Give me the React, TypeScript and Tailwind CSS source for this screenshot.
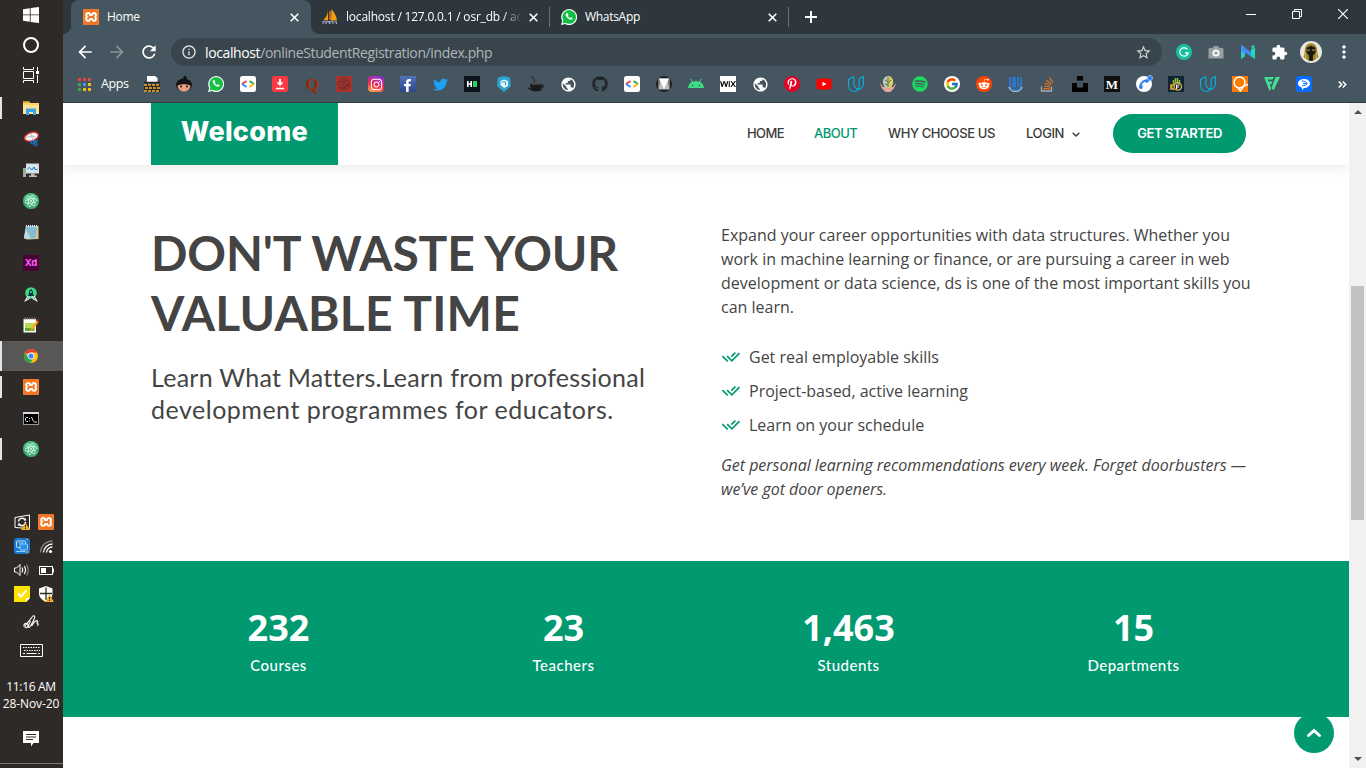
import React from "react";
import type { ReactNode } from "react";
import {
  FaInstagram, FaFacebookF, FaTwitter, FaGithub, FaPinterestP,
  FaSpotify, FaRedditAlien, FaPhoneAlt, FaWix,
} from "react-icons/fa";
import { FcGoogle } from "react-icons/fc";
import { SiXampp, SiUdacity } from "react-icons/si";
import { RiCheckDoubleLine } from "react-icons/ri";
import { BiChevronDown } from "react-icons/bi";
import { MdExtension, MdArrowBack, MdArrowForward, MdRefresh, MdInfoOutline, MdStarBorder, MdMoreVert, MdPublic } from "react-icons/md";

const Svg = ({ children, size = 16 }: { children: ReactNode; size?: number }) => (
  <svg width={size} height={size} viewBox="0 0 16 16" fill="none" className="block shrink-0">{children}</svg>
);

const Xampp = () => (
  <span className="flex size-4 shrink-0 items-center justify-center rounded-[2px] bg-white text-[#f37623]">
    <SiXampp size={16} />
  </span>
);

const Whats = () => (
  <Svg>
    <path d="M0 16l1.200-4A8 8 0 1 1 4.200 15Z" fill="#fff" />
    <path d="M1.600 14.500l.8-3A6.800 6.800 0 1 1 4.600 13.700Z" fill="#12c143" />
    <path d="M5.300 4.200c-1 .7-1 2.300.9 4.400 2 2.200 4 2.700 5 1.700.5-.5.500-1.100.2-1.300L10 8.200l-.9.9C8 8.700 7.200 7.800 6.800 7l.7-.8-.7-1.700c-.2-.5-1-.6-1.500-.3Z" fill="#fff" />
  </Svg>
);

const Atom = () => (
  <Svg>
    <circle cx="8" cy="8" r="8" fill="#4fbf87" />
    <path d="M0 8a8 8 0 0 0 16 0Z" fill="#2a9865" opacity=".5" />
    <g stroke="#e6fbef" strokeWidth=".8">
      <ellipse cx="8" cy="8" rx="2.300" ry="5.800" transform="rotate(20 8 8)" />
      <ellipse cx="8" cy="8" rx="2.300" ry="5.800" transform="rotate(80 8 8)" />
      <ellipse cx="8" cy="8" rx="2.300" ry="5.800" transform="rotate(140 8 8)" />
    </g>
    <circle cx="8" cy="8" r="1" fill="#e6fbef" />
  </Svg>
);

const CodeBox = () => (
  <Svg>
    <rect width="16" height="16" rx="2.500" fill="#fff" />
    <path d="M6.500 5 2 8" stroke="#ea4335" strokeWidth="2" />
    <path d="m2 8 4.500 3" stroke="#4285f4" strokeWidth="2" />
    <path d="M9.500 5 14 8" stroke="#34a853" strokeWidth="2" />
    <path d="m14 8-4.500 3" stroke="#fbbc05" strokeWidth="2" />
  </Svg>
);

const Chrome = () => (
  <Svg>
    <circle cx="8" cy="8" r="7" fill="#fbc116" />
    <path d="M8 8 1.900 4.500A7 7 0 0 1 14.100 4.500H8Z" fill="#e33b2e" />
    <path d="M1.900 4.500A7 7 0 0 0 7.500 15L10.500 9.500 8 8 5 9.500Z" fill="#2ba24c" />
    <circle cx="8" cy="8" r="3.400" fill="#fff" />
    <circle cx="8" cy="8" r="2.600" fill="#4285f4" />
  </Svg>
);

const Warn = () => (
  <>
    <path d="m11.500 8.500 4.500 7.500H7Z" fill="#f5b021" />
    <path d="M11.500 11v2.300M11.500 14v1" stroke="#222" strokeWidth="1" />
  </>
);

type Task = { icon: ReactNode; open?: boolean; active?: boolean };

const tasks: Task[] = [
  {
    open: true,
    icon: (
      <Svg>
        <path d="M0 1.500h6l1.500 1.500H16v11H0Z" fill="#fbd667" />
        <path d="M0 1.500h6V3H0Z" fill="#e8a92c" />
        <path d="M0 5h16v9H0Z" fill="#fee394" />
        <path d="M3 15V8.500h10V15h-3v-3H6v3Z" fill="#36a8e8" />
      </Svg>
    ),
  },
  {
    icon: (
      <Svg>
        <ellipse cx="8.500" cy="5.700" rx="7.200" ry="4.200" transform="rotate(-18 8.500 5.700)" fill="#f6f6f6" stroke="#c9302b" strokeWidth="1.500" />
        <path d="M3 6.500 9 5 8 2M9 5l4 1.500M8.500 5.500l2.500 5" stroke="#a9b1b5" strokeWidth=".8" />
        <ellipse cx="9.500" cy="11.500" rx="1.700" ry="1.300" stroke="#1674c4" strokeWidth="1.300" />
        <ellipse cx="12.700" cy="13" rx="1.300" ry="1.900" stroke="#1674c4" strokeWidth="1.300" />
        <path d="m11 10.500 4-1" stroke="#1674c4" strokeWidth="1.300" />
      </Svg>
    ),
  },
  {
    icon: (
      <Svg>
        <rect x="3" y="1.500" width="13" height="10" fill="#dcdcdc" />
        <rect x="4.500" y="3" width="10" height="7" fill="#cfeaf7" />
        <path d="m4.500 7 2-1.500L9 8l2-3 1.500 3 2-1" stroke="#1d6fa5" />
        <path d="M8 11.500h3.500v2H14V15H6v-1.500h2Z" fill="#bdbdbd" />
        <rect x="0" y="6" width="3" height="9" fill="#a9a9a9" />
        <path d="M1 7v4" stroke="#3fd428" />
      </Svg>
    ),
  },
  { icon: <Atom /> },
  {
    icon: (
      <Svg>
        <path d="M3 2h12.500v13L4 15.500 1 14Z" fill="#d9c795" />
        <path d="M3 2h11l-1 12.500H1Z" fill="#86bccd" />
        <path d="M2.500 5 8 14.500H1Z" fill="#d1eaf0" opacity=".7" />
        <path d="M3 2h11" stroke="#e8eef0" strokeWidth="2" strokeDasharray="1 1" />
      </Svg>
    ),
  },
  {
    icon: (
      <span className="flex size-4 items-center justify-center rounded-[2px] bg-[#470137] font-[Inter,sans-serif] text-[9.5px] leading-none font-bold text-[#ff61f6]">
        Xd
      </span>
    ),
  },
  {
    icon: (
      <Svg>
        <circle cx="8" cy="7" r="5.800" fill="#3ddc84" />
        <path d="M8 3c1.800 1 2.300 3 2.100 5l.9 2H5l.9-2C5.700 6 6.200 4 8 3Z" fill="#073042" />
        <circle cx="8" cy="6" r="1.100" fill="#3ddc84" />
        <path d="m5 10-2.500 4.500L5.500 13 7 10.500M11 10l2.500 4.500-3-1.500L9 10.500" stroke="#dfe8ea" strokeWidth="1.300" />
      </Svg>
    ),
  },
  {
    icon: (
      <Svg>
        <path d="M.5 2H13v13.500H.5Z" fill="#fff" />
        <path d="M2 6h9.500v8H2Z" fill="#b5dc50" />
        <path d="M2 11h9.500v3H2Z" fill="#5fa928" />
        <path d="M1 1.500h12" stroke="#777" strokeWidth="2" strokeDasharray="1.500 1" />
        <path d="m8 11.500 5.500-8 2 1.400-5.400 7.800L7.500 14Z" fill="#f3a81d" />
        <path d="m13.300 3.700 1.500-2 1.400 1-1 2Z" fill="#c22622" />
      </Svg>
    ),
  },
  { icon: <Chrome />, active: true, open: true },
  { icon: <Xampp />, open: true },
  {
    icon: (
      <Svg>
        <rect x=".5" y="2.500" width="15" height="12" fill="#000" stroke="#9b9b9b" />
        <path d="M0 3h16" stroke="#d8dce0" strokeWidth="2" />
        <path d="M5 7.500H3.500L2.500 8.500v2l1 1H5M6.500 8v1M6.500 10.500v1M8.500 7l2 4.500M11 12h3" stroke="#fff" strokeWidth=".9" />
      </Svg>
    ),
  },
  { icon: <Atom />, open: true },
];

const tray: ReactNode[] = [
  <Svg key="update">
    <path d="M1 3.500 15.500 1v13.500L1 13.500Z" stroke="#fff" />
    <path d="M4.500 7.500A3.500 3.500 0 0 1 11 6l.5-1.500M11.500 8A3.500 3.500 0 0 1 5 10l-.7 1.500" stroke="#fff" strokeWidth="1.500" />
    <Warn />
  </Svg>,
  <Xampp key="xampp" />,
  <Svg key="display">
    <rect width="16" height="16" rx="3" fill="#1879cf" />
    <rect x="2.500" y="3" width="9" height="6.500" rx="1" stroke="#bde3ff" />
    <rect x="6" y="6" width="7.500" height="6" rx="1" fill="#2a8fe0" stroke="#8fd0ff" />
    <path d="M4.500 5h5M2 13.500h9" stroke="#8fd0ff" />
    <path d="M11 14h4M12 1.500h2" stroke="#f2a33a" />
  </Svg>,
  <Svg key="wifi">
    <path d="M2.500 14.500A12 12 0 0 1 14.500 3" stroke="#8a8886" strokeWidth="1.300" />
    <path d="M5.500 14.500a9 9 0 0 1 9-8.500M8.500 14.500a6 6 0 0 1 6-5.500" stroke="#fff" strokeWidth="1.300" />
    <circle cx="12.500" cy="13.500" r="1.600" fill="#fff" />
  </Svg>,
  <Svg key="sound">
    <path d="M.5 6h2L6 2.500v11L2.500 10h-2Z" stroke="#fff" />
    <path d="M8 5.500q1.500 2.500 0 5M10.300 4q2.500 4 0 8" stroke="#fff" strokeWidth="1.200" />
    <path d="M12.500 2.500q3.500 5.500 0 11" stroke="#8a8886" strokeWidth="1.200" />
  </Svg>,
  <Svg key="battery">
    <rect x="1.500" y="4.500" width="13" height="8" stroke="#fff" />
    <rect x="3" y="6" width="5" height="5" fill="#fff" />
    <path d="M15.500 6.500v4" stroke="#fff" />
  </Svg>,
  <Svg key="note">
    <path d="M0 0h16v12l-4 4H0Z" fill="#fde300" />
    <path d="m4 7.500 3 3 5.500-6" stroke="#fff" strokeWidth="2" />
    <path d="M12 16v-4h4Z" fill="#fff" />
  </Svg>,
  <Svg key="shield">
    <path d="M8 0 14.500 2.500v5C14.500 12 11 14.500 8 16 5 14.500 1 12 1 7.500v-5Z" fill="#fff" />
    <path d="M8 1.500V14M2 7.500h12" stroke="#2d2926" strokeWidth="1.300" />
    <Warn />
  </Svg>,
];

const Sidebar = () => (
  <aside className="flex w-[63px] shrink-0 flex-col bg-[#2d2a27] text-white">
    <div className="flex h-[93px] flex-col items-center pr-px">
      <div className="flex h-[30px] items-center">
        <Svg>
          <path d="M0 2.200 6.800 1.200v6.200H0ZM7.600 1 16 0v7.400H7.600ZM0 8.300h6.800v6.500L0 13.800ZM7.600 8.300H16V16l-8.400-1Z" fill="#fff" />
        </Svg>
      </div>
      <div className="flex h-[30px] items-center">
        <span className="size-4 rounded-full border-[2.5px] border-white" />
      </div>
      <div className="flex h-[30px] items-center">
        <Svg>
          <path d="M.5 0v2.500h10V0M.5 16v-2.500h10V16M.5 4.500h10v7H.5ZM14.500 0v4M14.500 8v8" stroke="#fff" />
          <path d="M13 4h3v3h-3Z" fill="#fff" />
        </Svg>
      </div>
    </div>
    {tasks.map((t, i) => (
      <div key={i} className={t.active ? "mb-px flex h-[30px] items-center bg-[#5a5856]" : "flex h-[31px] items-center pb-px"}>
        <span className={t.open ? (t.active ? "h-full w-0.5 bg-[#e4e4e3]" : "h-[22px] w-0.5 bg-[#e4e4e3]") : "w-0.5"} />
        <span className="ml-[21px]">{t.icon}</span>
      </div>
    ))}
    <div className="mt-[49px] ml-3.5 grid w-10 grid-cols-2 gap-2">{tray}</div>
    <div className="mt-3 flex flex-col items-center pr-px">
      <Svg>
        <path d="M.8 12.500C.8 9.500 3 8.500 4.500 10c1.300 1.500-.5 4.500-2.200 3.500C.5 12 7 6.500 9 3c1-2 3.500-1.500 2.500 1C10.500 7 7 13 6 13.500c-1.500.3-.5-3 1.500-6.500M8.500 12c1.500-1 2-4 4-5s3.500 1 1 2c2 .2 2.500 1.800.5 2.500" stroke="#fff" strokeWidth="1.100" />
      </Svg>
      <svg width="23" height="13" viewBox="0 0 23 13" fill="none" className="mt-3.5 block">
        <path d="M.5.5h22v12H.5Z" stroke="#fff" />
        <path d="M3 3.500h17M4 6.500h16" stroke="#fff" strokeWidth="1.200" strokeDasharray="1.500 1" />
        <path d="M3 9.500h2M6.500 9.500h10M18 9.500h2" stroke="#fff" strokeWidth="1.200" />
      </svg>
    </div>
    <div className="mt-[21px] pr-px text-center font-['Open_Sans',sans-serif] text-[12px] leading-[17px] whitespace-nowrap">
      <div className="tracking-[-0.35px]">11:16 AM</div>
      <div className="tracking-[-0.1px]">28-Nov-20</div>
    </div>
    <div className="mt-[19px] flex justify-center pr-px">
      <Svg>
        <path d="M0 0h16v12H10.500L8 15.500V12H0Z" fill="#fff" />
        <path d="M3 3.500h10M3 6h10M3 8.500h7" stroke="#2d2a27" />
      </Svg>
    </div>
    <div className="mt-auto mb-1 h-px bg-[#7d7b79]" />
  </aside>
);

const Close = () => (
  <svg width="9" height="9" viewBox="0 0 9 9" fill="none" className="block shrink-0">
    <path d="m.7.7 7.600 7.600M8.300.7.7 8.300" stroke="#fff" strokeWidth="1.600" />
  </svg>
);

const TabStrip = () => (
  <div className="flex h-[34px] bg-[#2d373d] text-[12px] text-white">
    <div className="w-2 bg-[#455660]"><div className="h-full rounded-br-lg bg-[#2d373d]" /></div>
    <div className="flex w-60 items-center rounded-t-lg bg-[#455660] pr-3 pl-3">
      <Xampp />
      <span className="ml-2 tracking-[-0.3px]">Home</span>
      <span className="ml-auto"><Close /></span>
    </div>
    <div className="w-2 bg-[#455660]"><div className="h-full rounded-bl-lg bg-[#2d373d]" /></div>
    <div className="flex w-[231px] items-center pr-3 pl-[3px]">
      <Svg>
        <path d="M6 1C6 5 4 9 1 11l5 .5Z" fill="#f89c0e" />
        <path d="M9.500 0C13 4 14.500 8 15 11.500H9Z" fill="#f89c0e" />
        <path d="M8 2v9" stroke="#d8801a" strokeWidth="1.500" />
        <path d="M1 15v-2.500h2l1 2 1-2h2v2M8 15v-2.500h3V15M12 13h2.500v2" stroke="#9a9cc8" strokeWidth="1.200" />
      </Svg>
      <span className="ml-2 w-[182px] mask-[linear-gradient(to_right,#000_86%,transparent_97%)] tracking-[-0.2px] whitespace-nowrap">
        localhost / 127.0.0.1 / osr_db / ad
      </span>
      <span className="ml-auto"><Close /></span>
    </div>
    <div className="my-[7px] ml-[-1px] w-px bg-[#667178]" />
    <div className="flex w-[238px] items-center pr-[11px] pl-[11px]">
      <Whats />
      <span className="ml-2 tracking-[-0.3px]">WhatsApp</span>
      <span className="ml-auto"><Close /></span>
    </div>
    <div className="my-[7px] w-px bg-[#667178]" />
    <svg width="12" height="12" viewBox="0 0 12 12" fill="none" className="mt-[11px] ml-4 block">
      <path d="M6 0v12M0 6h12" stroke="#fff" strokeWidth="2" />
    </svg>
    <div className="mt-[9px] mr-[18px] ml-auto flex gap-9">
      <svg width="10" height="10" viewBox="0 0 10 10" fill="none"><path d="M0 5.500h10" stroke="#fff" /></svg>
      <svg width="10" height="10" viewBox="0 0 10 10" fill="none">
        <path d="M.5 2.500h7v7h-7ZM2.500 2.500v-2h7v7h-2" stroke="#fff" />
      </svg>
      <svg width="10" height="10" viewBox="0 0 10 10" fill="none"><path d="m0 0 10 10M10 0 0 10" stroke="#fff" strokeWidth="1.200" /></svg>
    </div>
  </div>
);

const AddressBar = () => (
  <div className="flex h-9 items-center bg-[#455660] text-white">
    <div className="flex w-[108px] items-center gap-3 pl-3">
      <MdArrowBack size={20} />
      <MdArrowForward size={20} className="text-[#89949a]" />
      <MdRefresh size={20} />
    </div>
    <div className="flex h-7 w-[991px] items-center rounded-full bg-[#39454c] pr-2.5 pl-2.5">
      <MdInfoOutline size={16} className="text-[#dfe2e4]" />
      <span className="ml-2 text-[14px] tracking-[-0.38px] text-[#afb5b9]"><span className="text-white">localhost</span>/onlineStudentRegistration/index.php</span>
      <MdStarBorder size={17} className="ml-auto text-[#ced2d4]" />
    </div>
    <div className="ml-3.5 flex items-center gap-4">
      <span className="flex size-4 items-center justify-center rounded-full bg-[#15c39a]">
        <Svg><path d="M11.300 5.400a4.200 4.200 0 1 0 .8 3.400H9M11 8.500v3" stroke="#fff" strokeWidth="1.300" /></Svg>
      </span>
      <Svg>
        <path d="M1.500 4h3L6 2h4l1.500 2h3l1 1v9.500H.5V5Z" fill="#9b9fa1" />
        <circle cx="8" cy="9" r="2.700" stroke="#fff" strokeWidth="1.700" />
      </Svg>
      <Svg>
        <path d="m1 1 4 2.500V12L1 15Z" fill="#4aa5ee" />
        <path d="m1 1 14 10v4L1 6Z" fill="#3f8df1" />
        <path d="M11 5.500 15 3.500V15l-4-3ZM11.500 1.500h3v1.800l-3 1.500Z" fill="#25d6b4" />
        <path d="M1 15V8l4 3v1Z" fill="#25d6b4" />
      </Svg>
      <MdExtension size={17} className="-ml-px" />
    </div>
    <span className="ml-3 flex size-[22px] items-center justify-center rounded-full bg-[#e8e6df]">
      <Svg size={20}>
        <path d="M8 1C4.500 1 3 4 3 8l-1 4 4 3h4l4-3-1-4c0-4-1.500-7-5-7Z" fill="#9b8427" />
        <path d="M4.500 4.500 8 3l3.500 1.500v4L9.500 11v4h-3v-4l-2-2.500Z" fill="#191715" />
        <path d="M3 8l1 5M13 8l-1 5M5 6.500h2M9 6.500h2" stroke="#e0c04c" strokeWidth=".8" />
      </Svg>
    </span>
    <MdMoreVert size={20} className="ml-3" />
  </div>
);

const bookmarks: ReactNode[] = [
  <Svg key="spy">
    <path d="M3 0h8l2.500 2v4H3Z" fill="#fff" />
    <path d="M0 6.500h16" stroke="#222" strokeWidth="1.500" />
    <path d="M0 8h16v8H0Z" fill="#2b2720" />
    <path d="M0 9h16M1 12h15M0 15h16" stroke="#f3b93a" strokeWidth="1.700" strokeDasharray="3 1" />
  </Svg>,
  <Svg key="ninja">
    <circle cx="9" cy="1.800" r="1.800" fill="#111" />
    <ellipse cx="8" cy="9" rx="8" ry="6.500" fill="#141414" />
    <path d="M1.500 9.500Q8 7 14.500 9.500C14 14 11 15.500 8 15.500S2 14 1.500 9.500Z" fill="#e9a184" />
    <path d="M4 10.500h2M10 10.500h2" stroke="#111" strokeWidth="1.700" />
  </Svg>,
  <Whats key="wa" />,
  <CodeBox key="code1" />,
  <Svg key="dl">
    <rect width="16" height="16" rx="2.500" fill="#fa3b43" />
    <path d="M7 3h2v3.500h2.500L8 10 4.500 6.500H7Z" fill="#fff" />
    <path d="M4 12.500h8" stroke="#fff" strokeWidth="1.500" />
  </Svg>,
  <span key="quora" className="flex size-4 items-center justify-center font-['Liberation_Serif',serif] text-[17px] leading-none font-bold text-[#a82400]">Q</span>,
  <Svg key="swirl">
    <rect width="16" height="16" fill="#a9322b" />
    <circle cx="8" cy="8" r="5.800" stroke="#69302d" />
    <path d="M3 7c3-4 5 1 8-3M5 12c-1-4 4-3 4-7M13 8c-4-1-3 4-7 4M8 13c0-3 4-2 5-4" stroke="#69302d" strokeWidth="1.200" />
  </Svg>,
  <span key="ig" className="flex size-4 items-center justify-center rounded-[4px] bg-[linear-gradient(20deg,#fdb743,#ee2a4b_45%,#b02bb8_75%,#6b3ad0)] text-white"><FaInstagram size={13} /></span>,
  <span key="fb" className="flex size-4 items-end justify-end bg-linear-to-b from-[#5174bb] to-[#2c4788] pr-0.5 text-white"><FaFacebookF size={13} /></span>,
  <FaTwitter key="tw" size={15} className="shrink-0 text-[#1da1f2]" />,
  <Svg key="hr">
    <rect width="16" height="16" fill="#0e141e" />
    <path d="M3.800 5v6M7.200 5v6M3.500 8h4" stroke="#fff" strokeWidth="1.600" />
    <rect x="9" y="5" width="4" height="6" fill="#1ed65f" />
  </Svg>,
  <Svg key="cube">
    <path d="M2 1.500 8 0l6 1.500 1 8.500L8 16 1 10Z" fill="#2fa4cf" />
    <path d="M8 3.500 12 5v5L8 12 4.500 9V5Z" fill="#e8f7fd" />
    <path d="M5.500 6h4v3" stroke="#2fa4cf" strokeWidth="1.200" />
  </Svg>,
  <Svg key="coffee">
    <path d="M5 0c-2 2 3 3 1 6" stroke="#17191b" />
    <path d="M2 8h11c0 5-2 7-5 7s-6-2-6-7Z" fill="#17191b" />
    <ellipse cx="7.500" cy="8" rx="5" ry="1" fill="#444" />
    <path d="M12 9.500c4-1.500 4 2 0 2.500M0 12q8 5 14 1" stroke="#17191b" strokeWidth="1.300" />
  </Svg>,
  <MdPublic key="g1" size={17} className="shrink-0" />,
  <FaGithub key="gh" size={16} className="shrink-0 text-[#20262b]" />,
  <CodeBox key="code2" />,
  <Svg key="md">
    <circle cx="8" cy="8" r="8" fill="#212121" />
    <path d="M2.500 2.500h11v11h-11Z" fill="#bdbdbd" />
    <path d="M2.500 2.500H5l-2.500 11ZM13.500 2.500H11l2.500 11Z" fill="#757575" />
    <path d="M3 2.500h10L8 13Z" fill="#fff" />
  </Svg>,
  <Svg key="android">
    <path d="M0 12a8 7 0 0 1 16 0Z" fill="#3ddc84" />
    <path d="m4.500 6-2-3M11.500 6l2-3" stroke="#3ddc84" />
    <circle cx="4.500" cy="9.500" r=".8" fill="#455660" />
    <circle cx="11.500" cy="9.500" r=".8" fill="#455660" />
  </Svg>,
  <span key="wix" className="flex size-4 items-center justify-center bg-white text-black"><FaWix size={16} /></span>,
  <MdPublic key="g2" size={17} className="shrink-0" />,
  <span key="pin" className="flex size-4 items-center justify-center rounded-full bg-[#e60023] text-white"><FaPinterestP size={12} /></span>,
  <Svg key="yt"><rect x=".5" y="2.500" width="15" height="11" rx="2.500" fill="#f00" /><path d="m6.500 5.800 4 2.200-4 2.200Z" fill="#fff" /></Svg>,
  <SiUdacity key="ud1" size={16} className="shrink-0 text-[#02b3e4]" />,
  <Svg key="brain">
    <path d="M0 7c1 5 4 8 6 9h4c2-1 5-4 6-9l-3 4H3Z" fill="#e8a39b" />
    <ellipse cx="8" cy="6" rx="5.200" ry="6" fill="#b8cfae" />
    <path d="M8 0a5.200 6 0 0 1 0 12Z" fill="#d8cf62" />
    <path d="M8 1v10M5 4l3 2M11 4 8 7M5 8l3 1" stroke="#5d6f58" />
  </Svg>,
  <span key="sp" className="flex size-4 items-center justify-center text-[#1ed760]"><FaSpotify size={16} /></span>,
  <span key="goo" className="flex size-4 items-center justify-center rounded-full bg-white"><FcGoogle size={14} /></span>,
  <span key="red" className="flex size-4 items-center justify-center rounded-full bg-[#ff4500] text-white"><FaRedditAlien size={12} /></span>,
  <Svg key="ublue">
    <path d="M2 1v8c0 3.500 2.500 5 5.500 5s5.500-1.500 5.500-5V1M5 1v9.500h2V1M10 1v10" stroke="#2f78d0" strokeWidth="1.800" />
    <path d="M1 11c1 3.500 3.500 4.500 6.500 4.500s5.500-1 6.500-4.500" stroke="#e4eef9" />
  </Svg>,
  <Svg key="so">
    <path d="M1.500 10.500v4.500h10v-4.500" stroke="#a9adb0" strokeWidth="1.300" />
    <path d="M3.500 12.700h6.500M3.800 10l6.200.8M4.700 7.200l6 2M6.500 4.300l5 3.800M9.500 1.500l3.500 5.200" stroke="#e8711d" strokeWidth="1.200" />
  </Svg>,
  <Svg key="uns"><path d="M5 0h6v4.500H5ZM0 7h5v4.500h6V7h5v9H0Z" fill="#000" /></Svg>,
  <span key="med" className="flex size-4 items-center justify-center bg-[#12100e] font-['Liberation_Serif',serif] text-[13px] leading-none font-bold text-white">M</span>,
  <span key="ph" className="relative flex size-4 items-center justify-center rounded-full bg-white text-[#2b7cf0]">
    <FaPhoneAlt size={10} className="rotate-90" />
    <span className="absolute -top-px -right-px size-[6px] rounded-full border border-[#8cbcff] bg-[#2b7cf0]" />
  </span>,
  <Svg key="hand">
    <rect width="16" height="16" fill="#0c2433" />
    <path d="M5.500 8V4M7.500 7V2M9.500 7V2M11.500 8V4" stroke="#8fbd3f" strokeWidth="1.500" />
    <path d="M3 8v6M6 8l-3 3 3 3" stroke="#e6a52e" strokeWidth="1.500" />
    <circle cx="9.800" cy="10.500" r="3.700" stroke="#efb73d" strokeWidth="1.300" />
    <path d="M8.500 9h3M8.500 11h2.500M8.500 9v4" stroke="#fff" />
  </Svg>,
  <SiUdacity key="ud2" size={16} className="shrink-0 text-[#02b3e4]" />,
  <Svg key="org">
    <rect width="16" height="16" fill="#ff7a00" />
    <circle cx="7.500" cy="6.500" r="5.500" stroke="#fff" strokeWidth="1.500" />
    <path d="m6 12 2.500 3 3-5c3 0 4-1.500 4.500-2" stroke="#fff" strokeWidth="1.500" />
  </Svg>,
  <Svg key="grn">
    <path d="M0 1h10L8.500 3.500h-5l1 2h4L7.500 8H6l1 5-1.500 2ZM11.500 1H16L9.500 14.500 7.500 12Z" fill="#43dd93" />
  </Svg>,
  <Svg key="msg">
    <rect width="16" height="16" rx="3" fill="#0a6cff" />
    <path d="M8 3c3.500 0 6 1.900 6 4.500S11 12 8 12l-2 2v-2.300C4 11 2 9.700 2 7.500S4.500 3 8 3Z" fill="#fff" />
    <path d="M6 5c2 0 5 1 5 2.500S8 9.500 6 10M7 7.500h4" stroke="#0a6cff" />
  </Svg>,
];

const appColors = ["bg-[#e8453c]", "bg-[#e8453c]", "bg-[#e8453c]", "bg-[#34a853]", "bg-[#4a90f5]", "bg-[#fbbc05]", "bg-[#34a853]", "bg-[#fbbc05]", "bg-[#fbbc05]"];

const BookmarkBar = () => (
  <div className="flex h-[33px] items-center border-b border-[#313d44] bg-[#455660] pb-1 text-white">
    <div className="ml-[15px] grid size-[13px] grid-cols-3 gap-[2px]">
      {appColors.map((c, i) => <span key={i} className={c} />)}
    </div>
    <span className="ml-2.5 w-[43px] text-[12.5px] tracking-[-0.4px]">Apps</span>
    <div className="flex w-[1168px] items-center justify-between">{bookmarks.map((b, i) => <span key={i} className="flex size-4 shrink-0 items-center justify-center">{b}</span>)}</div>
    <svg width="9" height="7" viewBox="0 0 9 7" fill="none" className="ml-[26px] block"><path d="m.7.500 3 3-3 3M4.700.500l3 3-3 3" stroke="#fff" strokeWidth="1.500" /></svg>
  </div>
);

const NavBar = () => (
  <header className="relative flex h-[62px] shrink-0 items-center bg-white pl-[88px] font-[Inter,sans-serif] text-[13px] font-medium text-[#3b3b3b] shadow-[0_0_15px_rgba(0,0,0,0.12)]">
    <div className="flex h-full w-[187px] justify-center bg-[#009970] pt-[9px] text-[27px] leading-10 font-extrabold tracking-[0.3px] text-white">Welcome</div>
    <nav className="ml-[409px] flex h-full items-center pb-px whitespace-nowrap">
      <span className="w-[67px] tracking-[-0.6px]">HOME</span>
      <span className="w-[74px] tracking-[-0.5px] text-[#009970]">ABOUT</span>
      <span className="w-[138px] tracking-[-0.4px]">WHY CHOOSE US</span>
      <span className="tracking-[-0.4px]">LOGIN</span>
      <BiChevronDown size={16} className="ml-1" />
      <span className="ml-[29px] flex h-[39px] w-[133px] items-center justify-center rounded-full bg-[#009970] font-semibold tracking-[-0.4px] text-white">GET STARTED</span>
    </nav>
  </header>
);

const points = ["Get real employable skills", "Project-based, active learning", "Learn on your schedule"];

const About = () => (
  <section className="flex h-[396px] shrink-0 pt-[58px] pl-[88px] text-[#444]">
    <div className="w-[570px] font-[Lato,sans-serif] whitespace-nowrap">
      <h2 className="text-[48px] leading-[60px] font-bold">
        <div className="tracking-[-0.15px]">DON'T WASTE YOUR</div>
        <div className="tracking-[0.2px]">VALUABLE TIME</div>
      </h2>
      <h3 className="mt-[18px] text-[25px] leading-8">
        <div className="tracking-[0.25px]">Learn What Matters.Learn from professional</div>
        <div className="tracking-[0.51px]">development programmes for educators.</div>
      </h3>
    </div>
    <div className="w-[540px] text-base leading-6">
      <p>Expand your career opportunities with data structures. Whether you work in machine learning or finance, or are pursuing a career in web development or data science, ds is one of the most important skills you can learn.</p>
      <ul className="mt-[26px] flex flex-col gap-2.5">
        {points.map((p) => (
          <li key={p} className="flex items-center">
            <RiCheckDoubleLine size={20} className="mr-2 text-[#009970]" />
            {p}
          </li>
        ))}
      </ul>
      <p className="mt-4 tracking-[-0.03px] italic">Get personal learning recommendations every week. Forget doorbusters — we’ve got door openers.</p>
    </div>
  </section>
);

const counts = [
  { n: "232", label: "Courses" },
  { n: "23", label: "Teachers" },
  { n: "1,463", label: "Students" },
  { n: "15", label: "Departments" },
];

const Counts = () => (
  <section className="grid h-[156px] shrink-0 grid-cols-4 bg-[#009970] pr-[73px] pl-[73px] text-center text-white">
    {counts.map((c) => (
      <div key={c.label} className="pt-[43px]">
        <div className="text-[36px] leading-[48px] font-bold">{c.n}</div>
        <div className="mt-px font-[Lato,sans-serif] text-[15px] leading-6 font-medium tracking-[0.5px]">{c.label}</div>
      </div>
    ))}
  </section>
);

export default function App() {
  return (
    <div className="flex h-[768px] w-[1366px] overflow-hidden bg-white font-['Open_Sans','Noto_Sans',sans-serif]">
      <Sidebar />
      <div className="flex min-w-0 flex-1 flex-col">
        <TabStrip />
        <AddressBar />
        <BookmarkBar />
        <div className="flex min-h-0 flex-1">
          <main className="relative flex w-[1286px] flex-col overflow-hidden bg-white">
            <NavBar />
            <About />
            <Counts />
            <button className="absolute right-[15px] bottom-[15px] flex size-10 items-center justify-center rounded-full bg-[#009970]">
              <svg width="16" height="10" viewBox="0 0 16 10" fill="none"><path d="m2.500 7.500 5.500-5 5.500 5" stroke="#fff" strokeWidth="3" strokeLinecap="round" /></svg>
            </button>
          </main>
          <div className="flex flex-1 flex-col items-center bg-[#f1f1f1]">
            <svg width="8" height="4" viewBox="0 0 8 4" className="mt-[7px]"><path d="M0 4h8L4 0Z" fill="#505050" /></svg>
            <div className="mt-[172px] h-[234px] w-[13px] bg-[#c1c1c1]" />
            <svg width="8" height="4" viewBox="0 0 8 4" className="mt-auto mb-[7px]"><path d="M0 0h8L4 4Z" fill="#505050" /></svg>
          </div>
        </div>
      </div>
    </div>
  );
}
